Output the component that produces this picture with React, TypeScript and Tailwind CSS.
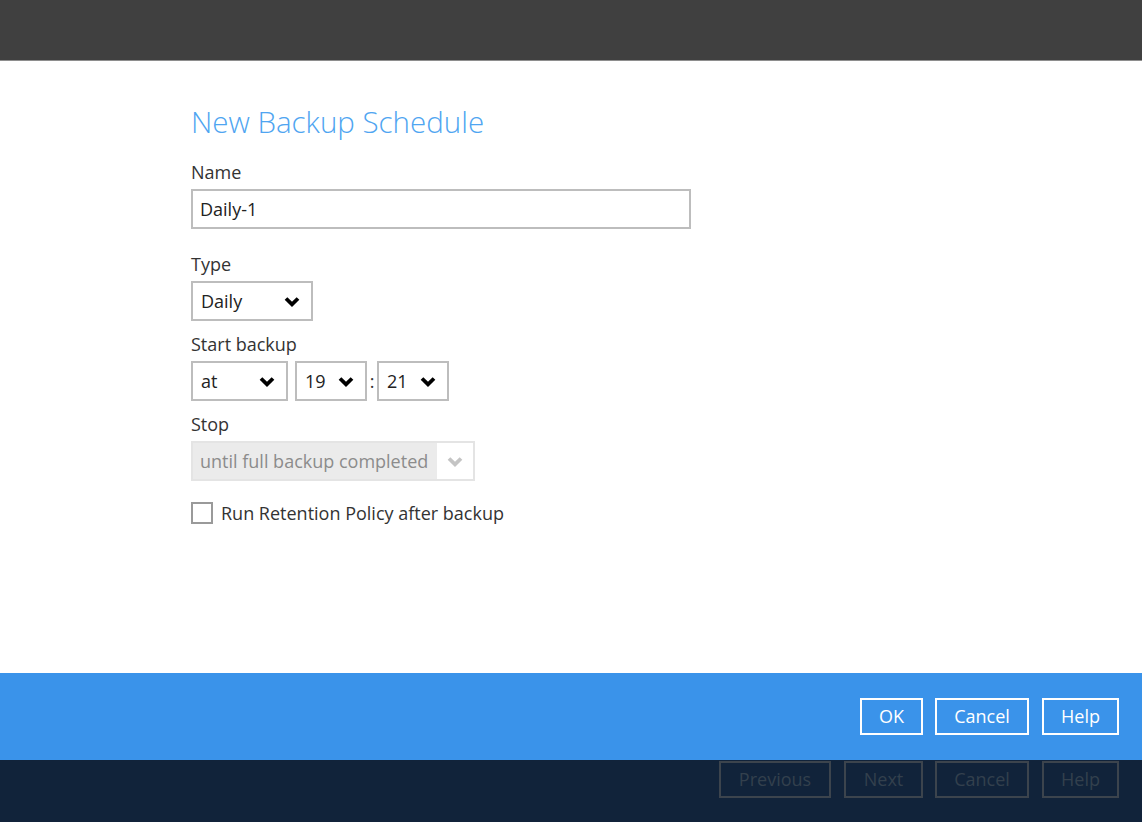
import React from "react";

const font = { fontFamily: '"Open Sans", "Noto Sans", sans-serif' };

function Chevron({ color = "#000" }: { color?: string }) {
  return (
    <svg width="16" height="11" viewBox="0 0 16 11" className="shrink-0">
      <path d="M2 2.5 L8 8.3 L14 2.5" fill="none" stroke={color} strokeWidth="3.8" strokeLinecap="butt" strokeLinejoin="miter" />
    </svg>
  );
}

function Select({ value, w }: { value: string; w: string }) {
  return (
    <div className={`flex h-[40px] ${w} items-center justify-between border-2 border-[#bdbdbd] bg-white pl-[8px] pr-[11px] text-[18px] text-[#222]`}>
      <span>{value}</span>
      <Chevron />
    </div>
  );
}

export default function App() {
  return (
    <div className="flex h-[822px] w-[1142px] flex-col overflow-hidden" style={font}>
      <div className="h-[61px] shrink-0 border-b border-[#8e8e8e] bg-[#404040]" />
      <div className="flex h-[612px] shrink-0 flex-col bg-white pl-[191px] pt-[43px]">
        <h1 className="text-[29.5px] font-light leading-[36px] text-[#4fa5f1]">New Backup Schedule</h1>
        <div className="mt-[20px] text-[18px] leading-[24px] text-[#333]">Name</div>
        <div className="mt-[5px] flex h-[40px] w-[500px] items-center border-2 border-[#bdbdbd] px-[7px] text-[18px] text-[#222]">
          Daily-1
        </div>
        <div className="mt-[23px] text-[18px] leading-[24px] text-[#333]">Type</div>
        <div className="mt-[5px]">
          <Select value="Daily" w="w-[122px]" />
        </div>
        <div className="mt-[11px] text-[18px] leading-[24px] text-[#333]">Start backup</div>
        <div className="mt-[5px] flex items-center">
          <Select value="at" w="w-[97px]" />
          <div className="w-[7px]" />
          <Select value="19" w="w-[72px]" />
          <span className="w-[10px] text-center text-[18px] text-[#333]">:</span>
          <Select value="21" w="w-[72px]" />
        </div>
        <div className="mt-[11px] text-[18px] leading-[24px] text-[#333]">Stop</div>
        <div className="mt-[5px] flex h-[40px] w-[284px] border-2 border-[#e4e4e4] bg-[#ebebeb] text-[18px] text-[#8c8c8c]">
          <div className="flex flex-1 items-center whitespace-nowrap pl-[7px]">until full backup completed</div>
          <div className="flex w-[36px] items-center justify-center bg-white">
            <Chevron color="#c4c4c4" />
          </div>
        </div>
        <div className="mt-[20px] flex items-center gap-[8px] text-[18px] leading-[24px] text-[#333]">
          <div className="h-[22px] w-[22px] border-2 border-[#9a9a9a] bg-white" />
          <span>Run Retention Policy after backup</span>
        </div>
      </div>
      <div className="flex h-[87px] shrink-0 items-center justify-end bg-[#3a93ea] pr-[23px]">
        <div className="flex">
          <button className="h-[37px] w-[63px] border-2 border-white text-[18px] text-white">OK</button>
          <button className="ml-[12px] h-[37px] w-[94px] border-2 border-white text-[18px] text-white">Cancel</button>
          <button className="ml-[13px] h-[37px] w-[77px] border-2 border-white text-[18px] text-white">Help</button>
        </div>
      </div>
      <div className="flex flex-1 items-start justify-end bg-[#11233a] pr-[23px] pt-[1px]">
        <div className="flex">
          <button className="h-[37px] w-[112px] border-2 border-[#3c444d] text-[18px] text-[#33404d]">Previous</button>
          <button className="ml-[13px] h-[37px] w-[79px] border-2 border-[#3c444d] text-[18px] text-[#33404d]">Next</button>
          <button className="ml-[12px] h-[37px] w-[94px] border-2 border-[#3c444d] text-[18px] text-[#33404d]">Cancel</button>
          <button className="ml-[13px] h-[37px] w-[77px] border-2 border-[#3c444d] text-[18px] text-[#33404d]">Help</button>
        </div>
      </div>
    </div>
  );
}
